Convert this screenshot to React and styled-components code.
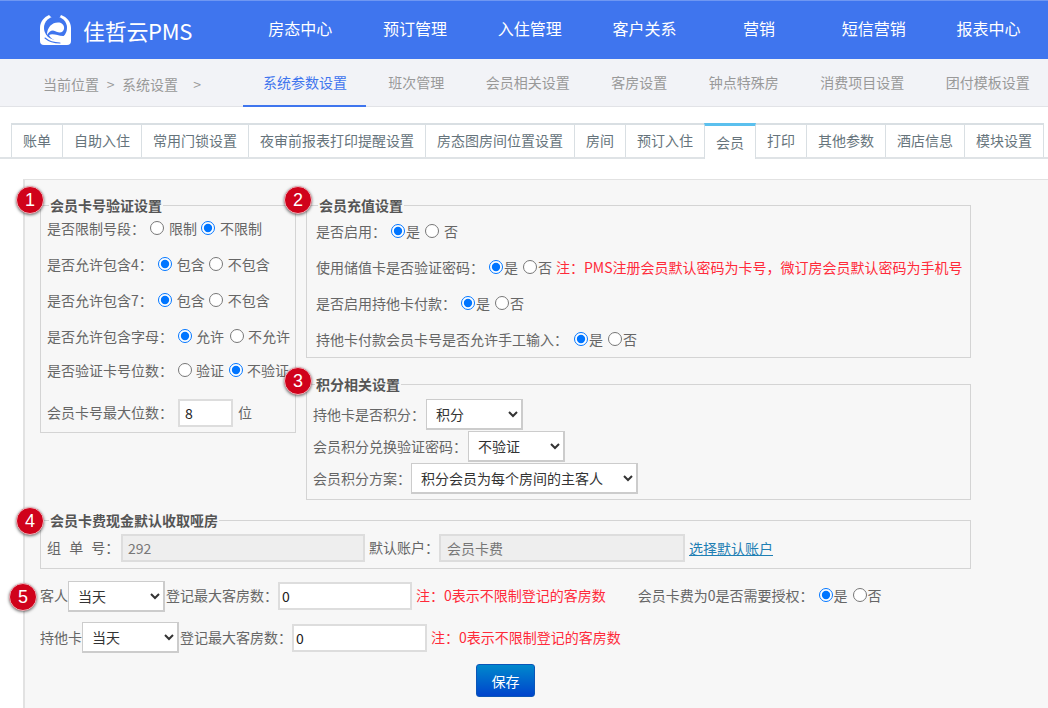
import React from "react";
import styled, { createGlobalStyle } from "styled-components";

const Global = createGlobalStyle`
  html, body { margin: 0; padding: 0; height: 100%; overflow: hidden; background: #fff; }
  body { font-family: "Noto Sans CJK SC", "Liberation Sans", sans-serif; font-size: 14px; color: #666; }
  #root { height: 100%; }
`;

const Page = styled.div`
  display: flex; flex-direction: column; height: 708px; width: 1048px; overflow: hidden;
`;
const Header = styled.header`
  display: flex; align-items: center; height: 58px; flex: none;
  background: #3f75ee; border-top: 1px solid #6f97f2; color: #fff;
`;
const Brand = styled.div`
  width: 243px; flex: none; display: flex; align-items: center; padding-left: 40px; box-sizing: border-box; gap: 12px;
`;
const BrandName = styled.span`font-size: 22px; letter-spacing: -0.3px; line-height: 30px; color: #fff; margin-left: -1px;`;
const NavItem = styled.a`
  width: 114.7px; flex: none; text-align: center; font-size: 16px; line-height: 24px; color: #fff; margin-top: -4px;
`;
const SubBar = styled.div`
  display: flex; height: 47px; flex: none; background: #f2f3f7; border-bottom: 1px solid #e2e3e7;
`;
const Crumbs = styled.div`
  width: 243px; flex: none; box-sizing: border-box; padding: 15px 0 0 43px; color: #999; line-height: 20px; white-space: pre; word-spacing: 4.5px;
`;
const SubTab = styled.a`
  padding: ${(p) => (p.$first ? "0 18.5px 0 20px" : "0 20.75px")}; margin-right: ${(p) => (p.$first ? 2 : 0)}px;
  line-height: 46px; box-sizing: border-box;
  color: ${(p) => (p.$active ? "#3f75ee" : "#999")};
  border-bottom: ${(p) => (p.$active ? "2px solid #3f75ee" : "none")};
  margin-bottom: -1px; height: 48px; white-space: nowrap;
`;
const TabStrip = styled.div`
  display: flex; flex: none; margin-top: 16px; padding-left: 11px; height: 34px; border-bottom: 2px solid #dfe3e6;
`;
const Tab = styled.a`
  box-sizing: border-box; padding: 0 11px; line-height: 30px; white-space: nowrap; color: #66747c; background: #fff;
  border: 1px solid #d9dfe3; border-top-width: 2px; border-bottom: none; margin-left: -1px;
  ${(p) =>
    p.$active
      ? "border-top: 3px solid #5bc0ee; line-height: 32px; position: relative; height: 36px;"
      : "height: 34px;"}
  &:first-child { margin-left: 0; }
`;
const Panel = styled.main`
  flex: 1; margin: 20px 0 0 23px; padding: 15px 0 0 16px;
  background: #f7f7f7; border-left: 2px solid #e2e2e2; border-top: 1px solid #e2e2e2; box-sizing: border-box; width: 1025px;
`;
const Content = styled.div`width: 931px; margin-left: -1px;`;
const Columns = styled.div`display: flex; align-items: flex-start; gap: 10px;`;
const RightColumn = styled.div`width: 665px; flex: none;`;
const Group = styled.fieldset`
  margin: ${(p) => p.$mt || 0}px 0 0; min-width: 0; box-sizing: border-box; border: 1px solid #d4d4d4;
  padding: 0 0 ${(p) => p.$pb || 0}px ${(p) => p.$pl || 6}px; width: ${(p) => p.$w || "100%"};
`;
const Legend = styled.legend`
  position: relative; margin-left: 2px; padding: 0 1px; font-weight: bold; font-size: 14px; line-height: 20px; color: #555;
`;
const Badge = styled.span`
  position: absolute; z-index: 5; left: ${(p) => p.$x}px; top: ${(p) => p.$y}px; width: 28px; height: 28px; box-sizing: border-box;
  border-radius: 50%; background: #d0021b; border: 1px solid #efb4bb; box-shadow: 0 1px 3px rgba(0, 0, 0, 0.55);
  color: #fff; font: 400 18px/26px "Liberation Sans", sans-serif; text-align: center;
`;
const Row = styled.div`
  display: flex; align-items: center; position: relative; white-space: nowrap;
  height: ${(p) => p.$h || 22}px; margin-top: ${(p) => p.$mt || 0}px;
`;
const Label = styled.span`
  flex: none; margin: -2px ${(p) => p.$after || 0}px 0 ${(p) => p.$before || 0}px;
  ${(p) => p.$w && `width: ${p.$w}px;`} ${(p) => p.$spread && "word-spacing: 5px; white-space: pre;"}
`;
const Radio = styled.input.attrs({ type: "radio" })`
  width: 14px; height: 14px; flex: none; margin: 0 0 3px ${(p) => p.$before ?? 5}px; accent-color: #0075ff;
`;
const RadioText = styled.span`margin: -2px 0 0 ${(p) => p.$gap ?? 1}px;`;
const Select = styled.select`
  box-sizing: border-box; width: ${(p) => p.$w}px; height: 31px; flex: none; margin-left: ${(p) => p.$before || 0}px;
  border: 1px solid #ccc; border-bottom-width: 2px; border-right-width: 2px; border-radius: 0; background-color: #fff; color: #333;
  font: 14px "Noto Sans CJK SC", sans-serif; padding: 0 0 0 5px; outline: none;
`;
const TextInput = styled.input`
  box-sizing: border-box; flex: none; width: ${(p) => p.$w}px; height: ${(p) => p.$h || 28}px;
  margin-left: ${(p) => p.$before || 0}px; padding: 0 0 0 ${(p) => p.$pad ?? 2}px; border: 2px solid #ddd; border-radius: 0;
  background: ${(p) => (p.disabled ? "#eee" : "#fff")}; color: ${(p) => (p.disabled ? "#777" : "#222")};
  font: 14px "Noto Sans CJK SC", sans-serif; outline: none;
`;
const Note = styled.span`color: #ff2a3a; margin: -2px 0 0 ${(p) => p.$before ?? 4}px; flex: none;`;
const LinkText = styled.a`color: #1f7fb4; text-decoration: underline; margin: -1px 0 0 4px; flex: none;`;
const SaveRow = styled.div`display: flex; justify-content: center; margin-top: 11px;`;
const SaveButton = styled.button`
  width: 59px; height: 33px; border: 1px solid #0a56b8; border-radius: 3px; color: #fff;
  background: linear-gradient(#0088cc, #0044cc); font: 14px "Noto Sans CJK SC", sans-serif; padding: 0;
`;

const Logo = () => (
  <svg width="32" height="31" viewBox="0 0 32 31" style={{ flex: "none" }}>
    <path fill="#fff" d="M9 0C4 2 0 7 0 13v13q0 4 4 4h23q4 0 4-4V13C31 7 27 2 21 0l-1 2h-9Z" />
    <circle cx="15.500" cy="13" r="11.500" fill="#3f75ee" />
    <path fill="#fff" d="M7 20C7 11 14 6 21 8c4 2 4 7 1 9-3 1.500-6-1-9-1.500-2.500 0-4.500 2-6 4.500Z" />
    <path fill="#fff" d="M9 20c4-2 9 1 14 1 3 0 5-2 6-5 1 6-3 10-9 10-5 0-9-2-11-6Z" />
    <path fill="none" stroke="#3f75ee" strokeWidth="1.1" strokeLinecap="round" d="M5 23c4 3.500 9 5 15 5" />
  </svg>
);

const Choice = ({ name, on, children, before, gap }) => (
  <>
    <Radio name={name} defaultChecked={on} $before={before} />
    <RadioText $gap={gap}>{children}</RadioText>
  </>
);

const navs = ["房态中心", "预订管理", "入住管理", "客户关系", "营销", "短信营销", "报表中心"];
const subs = ["系统参数设置", "班次管理", "会员相关设置", "客房设置", "钟点特殊房", "消费项目设置", "团付模板设置"];
const tabs = ["账单", "自助入住", "常用门锁设置", "夜审前报表打印提醒设置", "房态图房间位置设置", "房间", "预订入住", "会员", "打印", "其他参数", "酒店信息", "模块设置"];

export default function App() {
  return (
    <Page>
      <Global />
      <Header>
        <Brand>
          <Logo />
          <BrandName>佳哲云PMS</BrandName>
        </Brand>
        {navs.map((n) => (
          <NavItem key={n}>{n}</NavItem>
        ))}
      </Header>
      <SubBar>
        <Crumbs>{"当前位置 > 系统设置  >"}</Crumbs>
        {subs.map((s, i) => (
          <SubTab key={s} $active={i === 0} $first={i === 0}>
            {s}
          </SubTab>
        ))}
      </SubBar>
      <TabStrip>
        {tabs.map((t) => (
          <Tab key={t} $active={t === "会员"}>
            {t}
          </Tab>
        ))}
      </TabStrip>
      <Panel>
        <Content>
          <Columns>
            <Group $w="256px" $pb={5}>
              <Legend>
                <Badge $x={-33} $y={-9}>1</Badge>
                会员卡号验证设置
              </Legend>
              <Row $mt={3}>
                <Label>是否限制号段：</Label>
                <Choice name="a" gap={5}>限制</Choice>
                <Choice name="a" on before={4} gap={5}>不限制</Choice>
              </Row>
              <Row $mt={14}>
                <Label>是否允许包含4：</Label>
                <Choice name="b" on gap={5}>包含</Choice>
                <Choice name="b" before={4} gap={5}>不包含</Choice>
              </Row>
              <Row $mt={14}>
                <Label>是否允许包含7：</Label>
                <Choice name="c" on gap={5}>包含</Choice>
                <Choice name="c" before={4} gap={5}>不包含</Choice>
              </Row>
              <Row $mt={14}>
                <Label>是否允许包含字母：</Label>
                <Choice name="d" on gap={4}>允许</Choice>
                <Choice name="d" before={6} gap={4}>不允许</Choice>
              </Row>
              <Row $mt={12}>
                <Label>是否验证卡号位数：</Label>
                <Choice name="e" gap={4}>验证</Choice>
                <Choice name="e" on before={5} gap={4}>不验证</Choice>
              </Row>
              <Row $h={28} $mt={17}>
                <Label>会员卡号最大位数：</Label>
                <TextInput $w={55} $before={5} $pad={5} defaultValue="8" />
                <Label $before={5}>位</Label>
              </Row>
            </Group>
            <RightColumn>
              <Group $pb={6} $pl={9}>
                <Legend>
                  <Badge $x={-34} $y={-9}>2</Badge>
                  会员充值设置
                </Legend>
                <Row $mt={6}>
                  <Label>是否启用：</Label>
                  <Choice name="f" on>是</Choice>
                  <Choice name="f" gap={5}>否</Choice>
                </Row>
                <Row $mt={14}>
                  <Label>使用储值卡是否验证密码：</Label>
                  <Choice name="g" on>是</Choice>
                  <Choice name="g">否</Choice>
                  <Note>注：PMS注册会员默认密码为卡号，微订房会员默认密码为手机号</Note>
                </Row>
                <Row $mt={14}>
                  <Label>是否启用持他卡付款：</Label>
                  <Choice name="h" on>是</Choice>
                  <Choice name="h">否</Choice>
                </Row>
                <Row $mt={14}>
                  <Label $after={1}>持他卡付款会员卡号是否允许手工输入：</Label>
                  <Choice name="i" on>是</Choice>
                  <Choice name="i">否</Choice>
                </Row>
              </Group>
              <Group $mt={16} $pb={5} $pl={6}>
                <Legend>
                  <Badge $x={-31} $y={-7}>3</Badge>
                  积分相关设置
                </Legend>
                <Row $h={31} $mt={5}>
                  <Label>持他卡是否积分：</Label>
                  <Select $w={97} $before={1}>
                    <option>积分</option>
                  </Select>
                </Row>
                <Row $h={31} $mt={1}>
                  <Label>会员积分兑换验证密码：</Label>
                  <Select $w={97} $before={1}>
                    <option>不验证</option>
                  </Select>
                </Row>
                <Row $h={31} $mt={1}>
                  <Label>会员积分方案：</Label>
                  <Select $w={227}>
                    <option>积分会员为每个房间的主客人</option>
                  </Select>
                </Row>
              </Group>
            </RightColumn>
          </Columns>
          <Group $mt={10} $pb={6}>
            <Legend>
              <Badge $x={-33} $y={-3}>4</Badge>
              会员卡费现金默认收取哑房
            </Legend>
            <Row $h={28} $mt={4}>
              <Label $w={74} $spread>组 单 号：</Label>
              <TextInput $w={244} $pad={5} disabled defaultValue="292" />
              <Label $before={4} $w={70}>默认账户：</Label>
              <TextInput $w={246} $pad={6} disabled defaultValue="会员卡费" />
              <LinkText>选择默认账户</LinkText>
            </Row>
          </Group>
          <Row $h={30} $mt={12}>
            <Badge $x={-31} $y={2}>5</Badge>
            <Label>客人</Label>
            <Select $w={97}>
              <option>当天</option>
            </Select>
            <Label $before={1}>登记最大客房数：</Label>
            <TextInput $w={134} defaultValue="0" />
            <Note>注：0表示不限制登记的客房数</Note>
            <Label $before={32}>会员卡费为0是否需要授权：</Label>
            <Choice name="j" on>是</Choice>
            <Choice name="j">否</Choice>
          </Row>
          <Row $h={31} $mt={11}>
            <Label>持他卡</Label>
            <Select $w={97}>
              <option>当天</option>
            </Select>
            <Label $before={1}>登记最大客房数：</Label>
            <TextInput $w={135} defaultValue="0" />
            <Note>注：0表示不限制登记的客房数</Note>
          </Row>
          <SaveRow>
            <SaveButton>保存</SaveButton>
          </SaveRow>
        </Content>
      </Panel>
    </Page>
  );
}
